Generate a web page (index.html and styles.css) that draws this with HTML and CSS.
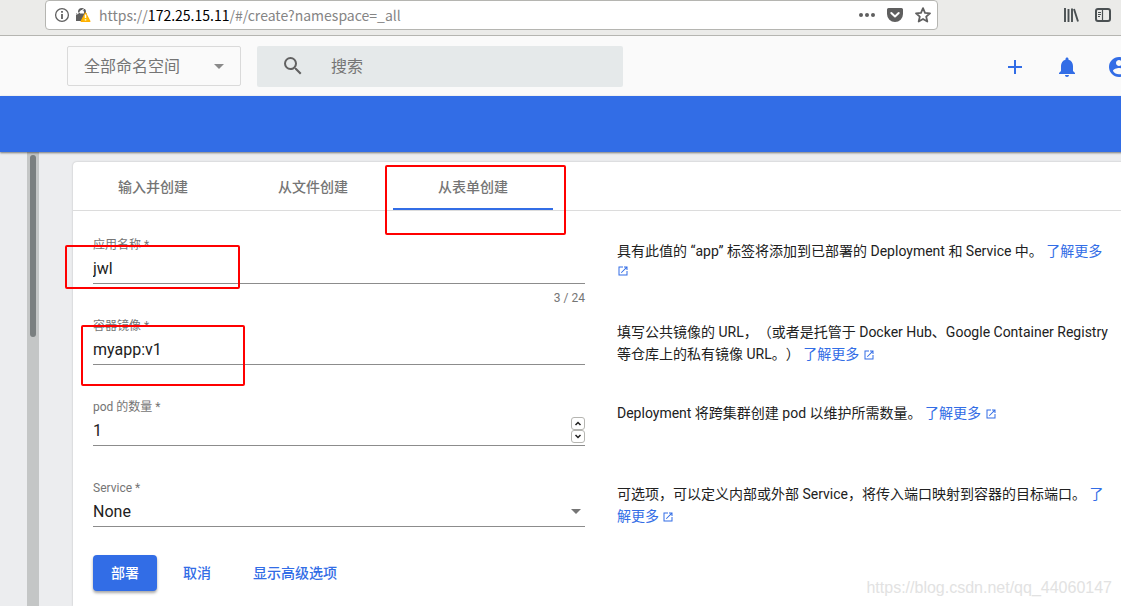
FILE: index.html
```html
<!DOCTYPE html>
<html lang="zh-CN">
<head>
<meta charset="utf-8">
<title>Kubernetes Dashboard</title>
<link rel="stylesheet" href="styles.css">
</head>
<body>
<div class="browser-bar">
  <div class="url-box">
    <svg class="url-info" width="16" height="16" viewBox="0 0 16 16"><circle cx="8" cy="8" r="6.4" fill="none" stroke="#606060" stroke-width="1.3"/><path d="M7.1 4h1.8v1.8H7.1zM7.1 7h1.8v5H7.1z" fill="#606060"/></svg>
    <svg class="url-lock" width="16" height="16" viewBox="0 0 16 16"><path d="M1 6.500h2V5a4 4 0 0 1 8 0v1.500h1V14H1z M5 6.500h4V5a2 2 0 0 0-4 0z" fill="#5f5f5f" fill-rule="evenodd"/><path d="M1.500 7.500L10 1" stroke="#fff" stroke-width="1"/><path d="M10.500 6L14.800 14.300H6.200z" fill="#ffbf00" stroke="#ffb000" stroke-width="1.400" stroke-linejoin="round"/><path d="M10.500 7.500v3.500M10.500 12.200v1.400" stroke="#fff" stroke-width="1.500"/></svg>
    <div class="url-text">https://<span class="url-host">172.25.15.11</span>/#/create?namespace=_all</div>
    <svg width="16" height="16" viewBox="0 0 16 16" fill="#5f5f5f"><circle cx="2" cy="8" r="2"/><circle cx="8" cy="8" r="2"/><circle cx="14" cy="8" r="2"/></svg>
    <svg width="16" height="16" viewBox="0 0 16 16"><path d="M1.500 1h13a1.500 1.500 0 0 1 1.500 1.500V7A8 8 0 0 1 0 7V2.500A1.500 1.500 0 0 1 1.500 1z" fill="#5f5f5f"/><path d="M4.300 6L8 9.500 11.700 6" fill="none" stroke="#fff" stroke-width="2" stroke-linecap="round" stroke-linejoin="round"/></svg>
    <svg width="16" height="16" viewBox="0 0 16 16"><path d="M8 1.200l2 4.600 5 .5-3.800 3.300 1.100 4.900L8 12l-4.300 2.500 1.100-4.900L1 6.300l5-.5z" fill="none" stroke="#5f5f5f" stroke-width="1.800" stroke-linejoin="round"/></svg>
  </div>
  <div class="browser-tools">
    <svg width="16" height="16" viewBox="0 0 16 16" fill="none" stroke="#4a5052" stroke-width="2"><path d="M2 1v14M5.500 2v13M9 1.500v13.500M11 2l4 12.500" stroke-width="1.900"/></svg>
    <svg width="16" height="16" viewBox="0 0 16 16" fill="none" stroke="#4a5052"><rect x="1" y="2" width="14" height="12" rx="2" stroke-width="2"/><path d="M7.500 2v12" stroke-width="1.200"/><path d="M3 5.500h3M3 7.500h3M3 9.500h2"/></svg>
  </div>
</div>

<div class="dashboard">
  <header class="topbar">
    <div class="namespace">
      <select class="namespace-select" aria-label="命名空间"><option>全部命名空间</option></select>
      <svg class="caret" width="10" height="5" viewBox="0 0 10 5"><path d="M0 0h10L5 5z" fill="#8a8a8a"/></svg>
    </div>
    <label class="search">
      <svg width="24" height="24" viewBox="0 0 24 24" fill="#616161"><path d="M15.500 14h-.79l-.28-.27A6.471 6.471 0 0 0 16 9.500 6.500 6.500 0 1 0 9.500 16c1.610 0 3.090-.59 4.230-1.570l.27.28v.79l5 4.990L20.490 19l-4.990-5zm-6 0C7.010 14 5 11.990 5 9.500S7.010 5 9.500 5 14 7.010 14 9.500 11.990 14 9.500 14z"/></svg>
      <input class="search-input" type="text" placeholder="搜索" aria-label="搜索">
    </label>
    <nav class="actions">
      <button class="icon-button" aria-label="创建"><svg width="24" height="24" viewBox="0 0 24 24"><path d="M19 13h-6v6h-2v-6H5v-2h6V5h2v6h6v2z"/></svg></button>
      <button class="icon-button" aria-label="通知"><svg width="24" height="24" viewBox="0 0 24 24"><path d="M12 22c1.100 0 2-.9 2-2h-4c0 1.100.89 2 2 2zm6-6v-5c0-3.070-1.640-5.640-4.500-6.320V4c0-.83-.67-1.500-1.500-1.500s-1.500.67-1.500 1.500v.68C7.630 5.360 6 7.920 6 11v5l-2 2v1h16v-1l-2-2z"/></svg></button>
      <button class="icon-button" aria-label="用户"><svg width="24" height="24" viewBox="0 0 24 24"><path d="M12 2C6.480 2 2 6.480 2 12s4.480 10 10 10 10-4.480 10-10S17.520 2 12 2zm0 3c1.660 0 3 1.340 3 3s-1.340 3-3 3-3-1.340-3-3 1.340-3 3-3zm0 14.200a7.200 7.200 0 0 1-6-3.220c.03-1.990 4-3.080 6-3.080 1.990 0 5.970 1.090 6 3.080a7.200 7.200 0 0 1-6 3.220z"/></svg></button>
    </nav>
  </header>
  <div class="banner"></div>
  <div class="content">
    <div class="scroll-track"><div class="scroll-thumb"></div></div>
    <main class="card">
      <div class="tabs" role="tablist">
        <button class="tab" role="tab">输入并创建</button>
        <button class="tab" role="tab">从文件创建</button>
        <button class="tab tab-active" role="tab" aria-selected="true">从表单创建</button>
      </div>
      <form class="form">
        <div class="row">
          <div class="field">
            <label class="label" for="app-name">应用名称 *</label>
            <div class="control"><input class="input" id="app-name" type="text" value="jwl"></div>
            <div class="hint">3 / 24</div>
          </div>
          <p class="help"><span class="line">具有此值的 “app” 标签将添加到已部署的 Deployment 和 Service 中。</span> <a class="link" href="#"><span class="line">了解更多</span> <svg class="open" viewBox="0 0 24 24"><path d="M19 19H5V5h7V3H3v18h18v-9h-2v7zM14 3v2h3.590l-9.830 9.830 1.410 1.410L19 6.410V10h2V3h-7z"/></svg></a></p>
        </div>
        <div class="row">
          <div class="field">
            <label class="label" for="image">容器镜像 *</label>
            <div class="control"><input class="input" id="image" type="text" value="myapp:v1"></div>
          </div>
          <p class="help"><span class="line">填写公共镜像的 URL，（或者是托管于 Docker Hub、Google Container Registry 等仓库上的私有镜像 URL。）</span> <a class="link" href="#"><span class="line">了解更多</span> <svg class="open" viewBox="0 0 24 24"><path d="M19 19H5V5h7V3H3v18h18v-9h-2v7zM14 3v2h3.590l-9.830 9.830 1.410 1.410L19 6.410V10h2V3h-7z"/></svg></a></p>
        </div>
        <div class="row">
          <div class="field">
            <label class="label" for="pods">pod 的数量 *</label>
            <div class="control">
              <input class="input" id="pods" type="number" value="1">
              <div class="spinner">
                <button class="step" type="button" aria-label="增加"><svg width="8" height="5" viewBox="0 0 8 5"><path d="M1.500 4L4 1.500 6.500 4"/></svg></button>
                <button class="step" type="button" aria-label="减少"><svg width="8" height="5" viewBox="0 0 8 5"><path d="M1.500 1L4 3.500 6.500 1"/></svg></button>
              </div>
            </div>
          </div>
          <p class="help"><span class="line">Deployment 将跨集群创建 pod 以维护所需数量。</span> <a class="link" href="#"><span class="line">了解更多</span> <svg class="open" viewBox="0 0 24 24"><path d="M19 19H5V5h7V3H3v18h18v-9h-2v7zM14 3v2h3.590l-9.830 9.830 1.410 1.410L19 6.410V10h2V3h-7z"/></svg></a></p>
        </div>
        <div class="row">
          <div class="field">
            <label class="label" for="service">Service *</label>
            <div class="control">
              <select class="input" id="service"><option>None</option></select>
              <svg class="caret caret-field" width="10" height="5" viewBox="0 0 10 5"><path d="M0 0h10L5 5z" fill="#757575"/></svg>
            </div>
          </div>
          <p class="help"><span class="line">可选项，可以定义内部或外部 Service，将传入端口映射到容器的目标端口。</span> <a class="link" href="#"><span class="line">了解更多</span> <svg class="open" viewBox="0 0 24 24"><path d="M19 19H5V5h7V3H3v18h18v-9h-2v7zM14 3v2h3.590l-9.830 9.830 1.410 1.410L19 6.410V10h2V3h-7z"/></svg></a></p>
        </div>
        <div class="buttons">
          <button class="button button-primary" type="button">部署</button>
          <button class="button" type="button">取消</button>
          <button class="button" type="button">显示高级选项</button>
        </div>
      </form>
    </main>
  </div>
</div>
<div class="mark mark-tab"></div>
<div class="mark mark-name"></div>
<div class="mark mark-image"></div>
<div class="watermark">https://blog.csdn.net/qq_44060147</div>
</body>
</html>
```
FILE: styles.css
```css
* { box-sizing: border-box; }
body {
  margin: 0;
  min-height: 100vh;
  display: flex;
  flex-direction: column;
  position: relative;
  overflow: hidden;
  background: #ecedef;
  color: #212121;
  font-family: Roboto, "Noto Sans CJK SC", sans-serif;
  font-size: 14px;
  text-spacing-trim: space-all;
}
button, input, select { font: inherit; color: inherit; }
button { border: 0; padding: 0; background: none; }
svg { display: block; flex: none; }

.browser-bar {
  display: flex;
  height: 36px;
  padding: 0 10px 5px 45px;
  background: #ebebe9;
  border-bottom: 1px solid #b5b5b1;
}
.url-box {
  flex: 1;
  display: flex;
  align-items: center;
  gap: 12px;
  padding: 0 6px 0 8px;
  background: #fff;
  border: 1px solid #b5b5b1;
  border-radius: 4px;
}
.url-lock { margin-left: -7px; }
.url-text {
  flex: 1;
  margin-left: -4px;
  color: #858585;
  font: 14px/24px "Noto Sans CJK SC", sans-serif;
  white-space: nowrap;
}
.url-host { color: #000; }
.browser-tools {
  display: flex;
  align-items: center;
  gap: 16px;
  padding-left: 125px;
}

.dashboard {
  flex: 1;
  display: flex;
  flex-direction: column;
  margin-right: -10px;
}
.topbar {
  display: flex;
  align-items: center;
  gap: 16px;
  height: 60px;
  padding-left: 67px;
  background: #fafafa;
}
.namespace { position: relative; width: 174px; }
.namespace-select {
  display: block;
  width: 100%;
  height: 40px;
  padding: 0 16px;
  appearance: none;
  border: 1px solid #dadada;
  border-radius: 2px;
  background: #fafafa;
  color: #757575;
  font-size: 16px;
}
.caret {
  position: absolute;
  right: 17px;
  top: 18px;
  pointer-events: none;
}
.search {
  display: flex;
  align-items: center;
  gap: 26px;
  width: 366px;
  height: 41px;
  padding: 0 24px;
  border-radius: 2px;
  background: #e5e9ea;
}
.search-input {
  flex: 1;
  min-width: 0;
  padding: 0;
  border: 0;
  outline: 0;
  background: none;
  font-size: 16px;
}
.search-input::placeholder { color: #757575; opacity: 1; }
.actions { display: flex; gap: 28px; margin-left: auto; padding-top: 2px; }
.icon-button { fill: #326de6; }
.banner {
  position: relative;
  height: 56px;
  background: #326de6;
  box-shadow: 0 1px 2px rgba(0, 0, 0, .5);
}
.content {
  flex: 1;
  display: flex;
  gap: 34px;
  padding: 0 2px 0 27px;
}
.scroll-track {
  width: 12px;
  padding: 3px;
  background: #c4c6c6;
}
.scroll-thumb {
  height: 182px;
  border-radius: 3px;
  background: #7a7f80;
}
.card {
  flex: 1;
  margin-top: 10px;
  background: #fff;
  border-radius: 4px 4px 0 0;
  box-shadow: 0 0 2px rgba(0, 0, 0, .24);
}
.tabs { display: flex; border-bottom: 1px solid #dcdcdc; }
.tab {
  width: 160px;
  height: 48px;
  border-bottom: 2px solid transparent;
  border-top: 2px solid transparent;
  color: #757575;
  font-weight: 500;
}
.tab-active { border-bottom-color: #326de6; }

.form { padding: 20px 20px 15px; }
.row {
  display: grid;
  grid-template-columns: 1fr 1fr;
  gap: 32px;
  height: 81px;
}
.field { padding-top: 6px; }
.label {
  display: block;
  margin-bottom: 2px;
  color: #757575;
  font-size: 12px;
  line-height: 16px;
}
.control {
  display: flex;
  position: relative;
  height: 29px;
  border-bottom: 1px solid #8c8c8c;
}
.input {
  flex: 1;
  min-width: 0;
  height: 26px;
  padding: 0;
  border: 0;
  outline: 0;
  background: none;
  appearance: none;
  font-size: 16px;
}
.input::-webkit-inner-spin-button { display: none; }
.caret-field { right: 4px; top: 11px; }
.spinner { display: flex; flex-direction: column; }
.step {
  display: flex;
  align-items: center;
  justify-content: center;
  width: 14px;
  height: 13px;
  border: 1px solid #b5b5b1;
  border-radius: 3px;
}
.step path { fill: none; stroke: #222; stroke-width: 1.5; }
.hint {
  margin-top: 6px;
  color: #757575;
  font-size: 12px;
  line-height: 16px;
  text-align: right;
}
.help { margin: 0; padding-top: 9px; line-height: 16px; }
.line { line-height: 22px; }
.link { color: #326de6; text-decoration: none; }
.open {
  display: inline-block;
  width: 12px;
  height: 12px;
  vertical-align: -2px;
  fill: currentColor;
}
.buttons { display: flex; gap: 10px; }
.button {
  height: 36px;
  padding: 0 16px 2px;
  border-radius: 4px;
  color: #326de6;
  font-weight: 500;
}
.button-primary {
  width: 64px;
  background: #326de6;
  color: #fff;
  box-shadow: 0 2px 3px rgba(0, 0, 0, .35);
}

.mark {
  position: absolute;
  border: 2px solid #f00;
  border-radius: 2px;
  pointer-events: none;
}
.mark-tab { left: 385px; top: 165px; width: 181px; height: 70px; }
.mark-name { left: 65px; top: 245px; width: 175px; height: 44px; }
.mark-image { left: 81px; top: 325px; width: 164px; height: 61px; }
.watermark {
  position: absolute;
  right: 9px;
  bottom: 8px;
  color: #e2e2e2;
  font: 16px/20px "Liberation Sans", Arial, sans-serif;
}
```
